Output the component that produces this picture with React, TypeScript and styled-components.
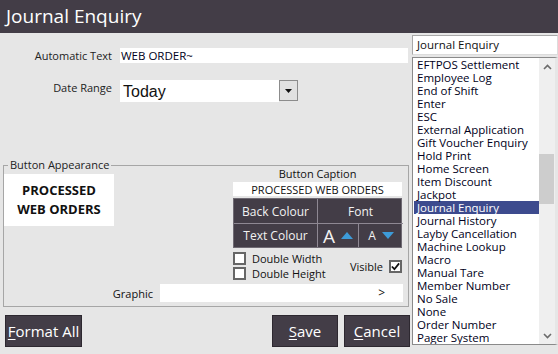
import React from 'react';
import styled, { createGlobalStyle } from 'styled-components';

const GlobalStyle = createGlobalStyle`
  html, body {
    margin: 0;
    padding: 0;
  }
  body {
    font-family: 'Open Sans', 'Noto Sans', 'DejaVu Sans', sans-serif;
  }
`;

const DARK = '#433d47';

const items = [
  'EFTPOS Settlement',
  'Employee Log',
  'End of Shift',
  'Enter',
  'ESC',
  'External Application',
  'Gift Voucher Enquiry',
  'Hold Print',
  'Home Screen',
  'Item Discount',
  'Jackpot',
  'Journal Enquiry',
  'Journal History',
  'Layby Cancellation',
  'Machine Lookup',
  'Macro',
  'Manual Tare',
  'Member Number',
  'No Sale',
  'None',
  'Order Number',
  'Pager System',
];

const Chevron = ({ down }: { down?: boolean }) => (
  <svg width="9" height="6" viewBox="0 0 9 6">
    <polyline
      points={down ? '1,1 4.5,4.5 8,1' : '1,5 4.5,1.5 8,5'}
      fill="none"
      stroke="#6b6b6b"
      strokeWidth="1.6"
    />
  </svg>
);

const Tri = ({ down }: { down?: boolean }) => (
  <svg width="12" height="7" viewBox="0 0 12 7">
    <polygon points={down ? '0,0 12,0 6,7' : '0,7 12,7 6,0'} fill="#3d9bd8" />
  </svg>
);

export default function App() {
  return (
    <>
      <GlobalStyle />
      <Window>
        <TitleBar>Journal Enquiry</TitleBar>
        <Body>
          <LeftPane>
            <FieldRow>
              <Label>Automatic Text</Label>
              <TextBox>WEB ORDER~</TextBox>
            </FieldRow>
            <FieldRow $gap={17}>
              <Label>Date Range</Label>
              <Combo>
                <ComboValue>Today</ComboValue>
                <ComboButton>
                  <svg width="7" height="4" viewBox="0 0 7 4">
                    <polygon points="0,0 7,0 3.5,4" fill="#111" />
                  </svg>
                </ComboButton>
              </Combo>
            </FieldRow>

            <Group>
              <Legend>Button Appearance</Legend>
              <GroupTop>
                <Preview>
                  PROCESSED
                  <br />
                  WEB ORDERS
                </Preview>
                <Panel>
                  <CaptionLabel>Button Caption</CaptionLabel>
                  <CaptionBox>PROCESSED WEB ORDERS</CaptionBox>
                  <ColourGrid>
                    <Cell>Back Colour</Cell>
                    <Cell $last>Font</Cell>
                    <Cell $bottom>Text Colour</Cell>
                    <FontCells>
                      <Cell $bottom $last $split>
                        <BigA>A</BigA>
                        <Tri />
                      </Cell>
                      <Cell $bottom $last>
                        <SmallA>A</SmallA>
                        <Tri down />
                      </Cell>
                    </FontCells>
                  </ColourGrid>
                  <Checks>
                    <CheckCol>
                      <CheckRow>
                        <Box />
                        <CheckText>Double Width</CheckText>
                      </CheckRow>
                      <CheckRow>
                        <Box />
                        <CheckText>Double Height</CheckText>
                      </CheckRow>
                    </CheckCol>
                    <CheckRow>
                      <CheckText>Visible</CheckText>
                      <Box>
                        <svg width="10" height="9" viewBox="0 0 10 9">
                          <polyline
                            points="1,4.5 3.8,7.5 9,1"
                            fill="none"
                            stroke="#111"
                            strokeWidth="2"
                          />
                        </svg>
                      </Box>
                    </CheckRow>
                  </Checks>
                </Panel>
              </GroupTop>
              <GraphicRow>
                <GraphicLabel>Graphic</GraphicLabel>
                <GraphicBox>&gt;</GraphicBox>
              </GraphicRow>
            </Group>

            <Actions>
              <ActionButton $width={77}>
                <u>F</u>ormat All
              </ActionButton>
              <Spacer />
              <ActionButton $width={66}>
                <u>S</u>ave
              </ActionButton>
              <ActionButton $width={66}>
                <u>C</u>ancel
              </ActionButton>
            </Actions>
          </LeftPane>

          <RightPane>
            <SearchBox>Journal Enquiry</SearchBox>
            <ListBox>
              <ListItems>
                {items.map((item) => (
                  <ListItem key={item} $selected={item === 'Journal Enquiry'}>
                    {item}
                  </ListItem>
                ))}
              </ListItems>
              <ScrollBar>
                <ScrollArrow>
                  <Chevron />
                </ScrollArrow>
                <ScrollTrack>
                  <Thumb style={{ marginTop: 79 }} />
                </ScrollTrack>
                <ScrollArrow>
                  <Chevron down />
                </ScrollArrow>
              </ScrollBar>
            </ListBox>
          </RightPane>
        </Body>
      </Window>
    </>
  );
}

const Window = styled.div`
  width: 558px;
  height: 354px;
  background: #e6e6e6;
  display: flex;
  flex-direction: column;
  overflow: hidden;
  color: #111;
`;

const TitleBar = styled.div`
  height: 33px;
  flex: none;
  background: ${DARK};
  color: #fff;
  font-size: 19px;
  line-height: 33px;
  padding-left: 6px;
`;

const Body = styled.div`
  display: flex;
  flex: 1;
`;

const LeftPane = styled.div`
  width: 412px;
  display: flex;
  flex-direction: column;
  padding-top: 15px;
`;

const FieldRow = styled.div<{ $gap?: number }>`
  display: grid;
  grid-template-columns: 112px 1fr;
  column-gap: 8px;
  align-items: start;
  margin-top: ${(p) => p.$gap || 0}px;
  padding-right: 4px;
`;

const Label = styled.div`
  text-align: right;
  font-size: 11px;
  line-height: 15px;
  color: #222;
`;

const TextBox = styled.div`
  height: 15px;
  background: #fff;
  font-size: 11.5px;
  line-height: 15px;
  padding-left: 1px;
  color: #000020;
`;

const Combo = styled.div`
  display: flex;
  align-items: flex-start;
`;

const ComboValue = styled.div`
  width: 156px;
  height: 22px;
  background: #fff;
  font-family: 'Liberation Sans', Arial, sans-serif;
  font-size: 16px;
  line-height: 24px;
  padding-left: 3px;
`;

const ComboButton = styled.div`
  width: 17px;
  height: 19px;
  background: #e1e1e1;
  border: 1px solid #8c8c8c;
  display: flex;
  align-items: center;
  justify-content: center;
`;

const Group = styled.fieldset`
  margin: 56px 3px 0 3px;
  padding: 0;
  height: 149px;
  box-sizing: border-box;
  border: 1px solid #a6a6a6;
  min-width: 0;
`;

const Legend = styled.legend`
  margin-left: 4px;
  padding: 0 2px;
  font-size: 11px;
  line-height: 14px;
  color: #222;
`;

const GroupTop = styled.div`
  display: flex;
  align-items: flex-start;
`;

const Preview = styled.div`
  width: 110px;
  height: 52px;
  margin-top: 2px;
  background: #fff;
  display: flex;
  align-items: center;
  justify-content: center;
  text-align: center;
  font-weight: 700;
  font-size: 13px;
  line-height: 19px;
`;

const Panel = styled.div`
  width: 169px;
  margin-left: auto;
  margin-right: 6px;
  margin-top: -6px;
  display: flex;
  flex-direction: column;
`;

const CaptionLabel = styled.div`
  text-align: center;
  font-size: 11px;
  line-height: 15px;
  height: 16px;
`;

const CaptionBox = styled.div`
  height: 14px;
  background: #fff;
  text-align: center;
  font-size: 11px;
  line-height: 15px;
  color: #111;
`;

const ColourGrid = styled.div`
  margin-top: 2px;
  display: grid;
  grid-template-columns: 84px 85px;
  grid-template-rows: 24px 24px;
  background: ${DARK};
  border: 1px solid #6f6a73;
  box-sizing: border-box;
`;

const FontCells = styled.div`
  display: grid;
  grid-template-columns: 41px 1fr;
`;

const Cell = styled.div<{ $bottom?: boolean; $last?: boolean; $split?: boolean }>`
  display: flex;
  align-items: center;
  justify-content: center;
  gap: 6px;
  color: #f2f2f2;
  font-size: 12px;
  border-right: ${(p) => (p.$last && !p.$split ? 'none' : '1px solid #8e8893')};
  border-top: ${(p) => (p.$bottom ? '1px solid #8e8893' : 'none')};
`;

const BigA = styled.span`
  font-size: 19px;
  line-height: 20px;
`;

const SmallA = styled.span`
  font-size: 12px;
`;

const Checks = styled.div`
  display: flex;
  justify-content: space-between;
  align-items: center;
  margin-top: 4px;
`;

const CheckCol = styled.div`
  display: flex;
  flex-direction: column;
  gap: 2px;
`;

const CheckRow = styled.div`
  display: flex;
  align-items: center;
  gap: 6px;
`;

const Box = styled.div`
  width: 9px;
  height: 9px;
  border: 2px solid #666;
  background: #fff;
  display: flex;
  align-items: center;
  justify-content: center;
`;

const CheckText = styled.span`
  font-size: 11px;
  line-height: 13px;
`;

const GraphicRow = styled.div`
  display: grid;
  grid-template-columns: 149px 243px;
  column-gap: 7px;
  align-items: center;
  margin-top: 4px;
`;

const GraphicLabel = styled.div`
  text-align: right;
  font-size: 11px;
`;

const GraphicBox = styled.div`
  height: 18px;
  background: #fff;
  text-align: right;
  padding-right: 18px;
  font-size: 12px;
  line-height: 18px;
`;

const Actions = styled.div`
  display: flex;
  gap: 6px;
  margin-top: 8px;
  padding: 0 2px 0 5px;
`;

const Spacer = styled.div`
  flex: 1;
`;

const ActionButton = styled.div<{ $width: number }>`
  width: ${(p) => p.$width}px;
  height: 32px;
  box-sizing: border-box;
  background: ${DARK};
  border: 1px solid #2d2830;
  color: #fff;
  font-size: 15px;
  display: flex;
  align-items: center;
  justify-content: center;

  u {
    text-underline-offset: 2px;
  }
`;

const RightPane = styled.div`
  width: 146px;
  padding-top: 2px;
  display: flex;
  flex-direction: column;
`;

const SearchBox = styled.div`
  height: 20px;
  box-sizing: border-box;
  background: #fff;
  border: 1px solid #a8a8a8;
  border-right-color: #dcdcdc;
  border-bottom-color: #dcdcdc;
  font-size: 11.5px;
  line-height: 18px;
  padding-left: 4px;
`;

const ListBox = styled.div`
  margin-top: 2px;
  height: 288px;
  box-sizing: border-box;
  background: #fff;
  border: 1px solid #8a8a8a;
  border-right: 3px solid #e6e6e6;
  display: flex;
`;

const ListItems = styled.div`
  flex: 1;
  overflow: hidden;
`;

const ListItem = styled.div<{ $selected?: boolean }>`
  height: 13px;
  line-height: 13px;
  font-size: 11.5px;
  padding-left: 3px;
  margin-left: 1px;
  white-space: nowrap;
  color: ${(p) => (p.$selected ? '#fff' : '#000020')};
  background: ${(p) => (p.$selected ? '#3d4b8e' : 'transparent')};
`;

const ScrollBar = styled.div`
  width: 16px;
  background: #efefef;
  display: flex;
  flex-direction: column;
`;

const ScrollArrow = styled.div`
  height: 17px;
  display: flex;
  align-items: center;
  justify-content: center;
`;

const ScrollTrack = styled.div`
  flex: 1;
`;

const Thumb = styled.div`
  width: 15px;
  margin-left: 0;
  height: 50px;
  background: #cdcdcd;
`;
